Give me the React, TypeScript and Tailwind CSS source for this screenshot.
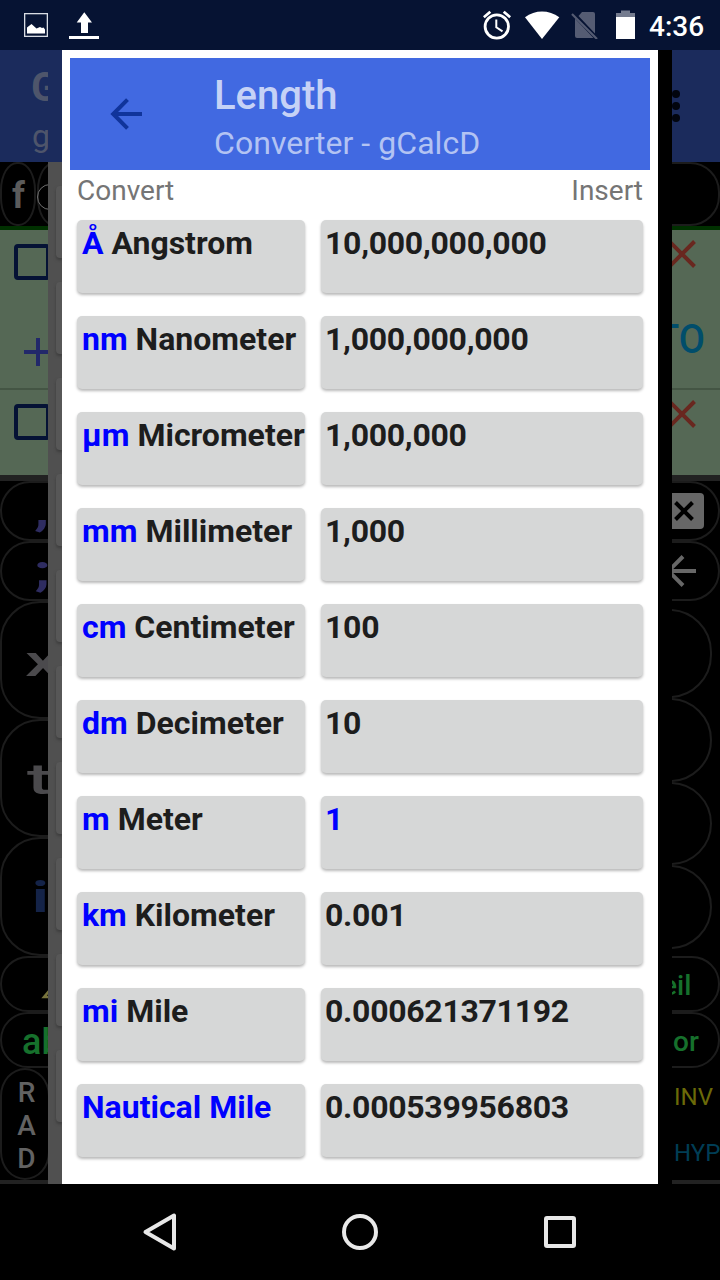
import React from "react";

type Unit = { symbol: string; name?: string; value: string; active?: boolean };

const units: Unit[] = [
  { symbol: "Å", name: "Angstrom", value: "10,000,000,000" },
  { symbol: "nm", name: "Nanometer", value: "1,000,000,000" },
  { symbol: "µm", name: "Micrometer", value: "1,000,000" },
  { symbol: "mm", name: "Millimeter", value: "1,000" },
  { symbol: "cm", name: "Centimeter", value: "100" },
  { symbol: "dm", name: "Decimeter", value: "10" },
  { symbol: "m", name: "Meter", value: "1", active: true },
  { symbol: "km", name: "Kilometer", value: "0.001" },
  { symbol: "mi", name: "Mile", value: "0.000621371192" },
  { symbol: "Nautical Mile", value: "0.000539956803" },
];

function StatusBar() {
  return (
    <div className="flex h-[50px] shrink-0 items-center bg-[#061333] text-white">
      <svg className="ml-6 h-6 w-6" viewBox="0 0 24 24">
        <rect x="0.6" y="0.6" width="22.8" height="22.8" fill="none" stroke="#d8dce4" strokeWidth="1.4" />
        <path d="M3 20.500V14.500l4.500-3.500 5 4.500 3.500-1.500 2 1 1.500-.5 1.500 2v4z" fill="#fff" />
      </svg>
      <svg className="ml-[21px] h-7 w-[30px]" viewBox="0 0 30 28">
        <path d="M15.300 1.200 23 11.500h-4v10.500h-7v-10.500H7.700z" fill="#fff" />
        <path d="M0 26h30v2H0zM0 25h30v1H0z" fill="#fff" />
      </svg>
      <svg className="ml-[384px] h-[30px] w-7" viewBox="0 0 28 30" fill="none" stroke="#fff">
        <circle cx="13.800" cy="16.500" r="11.700" strokeWidth="2.800" />
        <path d="M13.300 9.500v7.800l6.200 4" strokeWidth="2" />
        <path d="M.8 7.300 7.300 1.800M27.200 7.300l-6.500-5.500" strokeWidth="2.800" />
      </svg>
      <svg className="ml-[13px] h-7 w-9" viewBox="0 0 36 28">
        <path d="M1 6.300C11-1.600 25-1.600 35.300 6.300L18 28z" fill="#fff" />
      </svg>
      <svg className="ml-[11px] h-7 w-7" viewBox="0 0 28 28">
        <path d="M11 1h11a2 2 0 0 1 2 2v19.500L7.500 5zM4 7.500 22.500 27H6a2 2 0 0 1-2-2z" fill="#555c73" />
        <path d="m1 3 25 25" stroke="#555c73" strokeWidth="2.200" />
      </svg>
      <svg className="ml-[17px] h-[30px] w-5" viewBox="0 0 20 30">
        <path d="M5 0.500h9V3h5v7H0V3h5z" fill="#747b8e" />
        <path d="M0 7h19v22H0z" fill="#fff" />
      </svg>
      <span className="ml-[13px] pt-0.5 text-[28px] leading-[33px] font-medium">4:36</span>
    </div>
  );
}

const checkbox = "h-9 w-9 shrink-0 rounded-[4px] border-4 border-[#051235]";
const pill = "w-[96px] shrink-0 border-2 border-[#1c1c1c]";
const wide = "block origin-left scale-x-150 text-[42px] font-bold";
const wideLight = "block origin-left scale-x-[1.7] text-[42px] font-medium";

function LeftKeys() {
  return (
    <div className="flex w-12 shrink-0 flex-col overflow-hidden bg-black">
      <div className="h-28 shrink-0 bg-[#1b2b5c] pl-[31px] text-[#4e556b]">
        <div className="w-[17px] overflow-hidden pt-[14px] text-[40px] leading-[47px] font-bold">G</div>
        <div className="pt-[6px] pl-px text-[32px] leading-[38px]">g</div>
      </div>
      <div className="flex h-16 shrink-0 gap-px overflow-hidden text-[#5b5b5b]">
        <div className="flex w-9 shrink-0 items-center justify-center rounded-[17px/28px] border-2 border-[#1c1c1c] pt-1 pl-px text-[36px] font-bold">f</div>
        <div className="flex w-[60px] shrink-0 items-center rounded-[17px/28px] border-2 border-[#1c1c1c]">
          <div className="mt-1.5 -ml-0.5 h-[26px] w-[26px] shrink-0 rounded-full border border-[#707070]" />
        </div>
      </div>
      <div className="h-1 shrink-0 bg-[#003000]" />
      <div className="h-[245px] shrink-0 bg-[#556855]">
        <div className="flex h-[158px] flex-col pt-3.5 pl-3.5">
          <div className={checkbox} />
          <svg className="mt-[58px] ml-2.5 h-7 w-7 shrink-0" viewBox="0 0 28 28">
            <path d="M0 14h28M14 0v28" stroke="#22286a" strokeWidth="4" />
          </svg>
        </div>
        <div className="h-0.5 bg-[#445544]" />
        <div className="pt-3.5 pl-3.5"><div className={checkbox} /></div>
      </div>
      <div className="h-1.5 shrink-0 bg-[#222]" />
      <div className={`${pill} h-[60px] rounded-[30px] pl-8 text-[#2e2c61]`}>
        <span className={`${wide} leading-[55px]`}>,</span>
      </div>
      <div className={`${pill} h-[60px] rounded-[30px] pl-8 text-[#2e2c61]`}>
        <span className={`${wide} leading-[56px]`}>;</span>
      </div>
      <div className={`${pill} h-[118px] rounded-[40px] pl-[23px] text-[#4b4a4d]`}>
        <span className={`${wideLight} leading-[117px]`}>x</span>
      </div>
      <div className={`${pill} h-[118px] rounded-[40px] pl-[25px] text-[#4b4a4d]`}>
        <span className={`${wideLight} leading-[117px]`}>t</span>
      </div>
      <div className={`${pill} h-[119px] rounded-[40px] pl-[30px] text-[#142348]`}>
        <span className={`${wide} leading-[118px]`}>i</span>
      </div>
      <div className={`${pill} h-[56px] rounded-[28px] pl-[38px]`}>
        <svg className="mt-[26px] h-4 w-5" viewBox="0 0 20 16" fill="none" stroke="#77733c" strokeWidth="2.500">
          <path d="M14 1 4 13h16" />
        </svg>
      </div>
      <div className={`${pill} h-[56px] rounded-[28px] pl-5 text-[36px] leading-[56px] font-medium text-[#16702c]`}>ab</div>
      <div className="flex h-28 w-[50px] shrink-0 flex-col items-center rounded-[25px/28px] border-2 border-[#1c1c1c] pt-1.5 pl-[3px] text-[28px] leading-[33px] font-medium text-[#626262]">
        <span>R</span>
        <span>A</span>
        <span>D</span>
      </div>
      <div className="mt-auto h-1 shrink-0 bg-[#222]" />
    </div>
  );
}

function Cross() {
  return (
    <svg className="-ml-1 h-7 w-7" viewBox="0 0 28 28">
      <path d="m1.500 1.500 25 25M26.500 1.500l-25 25" stroke="#69271f" strokeWidth="4" />
    </svg>
  );
}

const endPill = "-ml-12 w-[96px] shrink-0 border-2 border-[#1c1c1c] pl-12";
const circle = "-ml-[46px] w-[86px] shrink-0 rounded-full border-2 border-[#1c1c1c]";

function RightKeys() {
  return (
    <div className="flex w-12 shrink-0 flex-col overflow-hidden bg-black">
      <div className="h-28 shrink-0 bg-[#1b2b5c] pt-10">
        <div className="flex flex-col gap-1">
          <i className="h-2 w-2 rounded-full bg-[#02050e]" />
          <i className="h-2 w-2 rounded-full bg-[#02050e]" />
          <i className="h-2 w-2 rounded-full bg-[#02050e]" />
        </div>
      </div>
      <div className={`${endPill} h-16 rounded-[30px]`} />
      <div className="h-1 shrink-0 bg-[#003000]" />
      <div className="h-[245px] shrink-0 overflow-hidden bg-[#556855]">
        <div className="h-[158px] overflow-hidden pt-[10px]">
          <Cross />
          <div className="mt-[48px] -ml-[16px] origin-left scale-x-95 text-[40px] leading-[47px] font-medium text-[#004d6b]">TO</div>
        </div>
        <div className="h-0.5 bg-[#445544]" />
        <div className="pt-[10px]"><Cross /></div>
      </div>
      <div className="h-1.5 shrink-0 bg-[#222]" />
      <div className={`${endPill} h-[60px] rounded-[30px] pt-[10px]`}>
        <div className="-ml-0.5 h-9 w-8 rounded-r-[4px] bg-[#676767]">
          <svg className="h-9 w-8" viewBox="0 0 32 36">
            <path d="m3.500 9.500 17 17m0-17-17 17" stroke="#000" strokeWidth="4" />
          </svg>
        </div>
      </div>
      <div className={`${endPill} h-[60px] rounded-[30px]`}>
        <svg className="mt-3 -ml-2 h-8 w-8" viewBox="0 0 32 32" fill="none" stroke="#676767" strokeWidth="4">
          <path d="M30 16H2M17 1.500 2.500 16 17 30.500" />
        </svg>
      </div>
      <div className={`${circle} mt-[8px] h-[89px]`} />
      <div className={`${circle} h-[84px]`} />
      <div className={`${circle} h-[83px]`} />
      <div className={`${circle} h-[84px]`} />
      <div className={`${endPill} mt-[7px] h-[56px] overflow-hidden rounded-[28px]`}>
        <div className="-ml-3 pt-[11px] text-[28px] leading-[33px] font-medium text-[#16702c]">eil</div>
      </div>
      <div className={`${endPill} h-[56px] rounded-[28px]`}>
        <div className="-ml-px pt-[11px] text-[28px] leading-[33px] font-medium text-[#16702c]">or</div>
      </div>
      <div className="pt-[15px] pl-0.5 text-[24px] leading-[28px] text-[#6b6a08]">INV</div>
      <div className="pt-[28px] pl-0.5 text-[24px] leading-[28px] text-[#003d55]">HYP</div>
      <div className="mt-auto h-1 shrink-0 bg-[#222]" />
    </div>
  );
}

function RearPanel() {
  return (
    <div className="flex w-3.5 shrink-0 flex-col overflow-hidden">
      <div className="h-28 shrink-0 bg-[#1b2b5c]" />
      <div className="flex grow flex-col items-end gap-6 bg-[#505050] pt-6">
        {units.map((unit) => (
          <div key={unit.symbol} className="h-[72px] w-1.5 shrink-0 rounded-l-[4px] bg-[#575757] shadow-[0_2px_3px_#3c3c3c]" />
        ))}
      </div>
    </div>
  );
}

const key =
  "flex h-[73px] items-start overflow-hidden rounded-[5px] bg-[#d6d7d7] pt-1 text-[32px] leading-[38px] font-bold whitespace-pre shadow-[0_2px_3px_rgba(0,0,0,0.28)]";

function ConverterDialog() {
  return (
    <main className="flex w-[596px] shrink-0 flex-col bg-white p-2 pb-0">
      <header className="flex h-28 shrink-0 bg-[#4169e1]">
        <svg className="mt-10 ml-10 h-8 w-8" viewBox="0 0 32 32" fill="none" stroke="#10349b" strokeWidth="4">
          <path d="M32 16H3M17.500 1.700 3.200 16l14.300 14.300" />
        </svg>
        <div className="ml-[72px]">
          <h1 className="pt-[14px] text-[40px] leading-[47px] font-medium text-[#c6d2f6]">Length</h1>
          <p className="pt-[5px] text-[32px] leading-[38px] tracking-[0.05px] text-[#b3c3f3]">Converter - gCalcD</p>
        </div>
      </header>
      <div className="flex h-[50px] shrink-0 justify-between px-[7px] pt-1 text-[28px] leading-[33px] text-[#757575]">
        <span>Convert</span>
        <span>Insert</span>
      </div>
      <div className="flex flex-col gap-[23px] px-[7px]">
        {units.map((unit) => (
          <div key={unit.symbol} className="flex justify-between">
            <button className={`${key} w-[228px] pl-[5px] text-[#1d1d1d]`}>
              <span className="text-[#0000ff]">{unit.symbol}</span>
              {unit.name ? <span> {unit.name}</span> : null}
            </button>
            <button className={`${key} w-[322px] pl-1 tracking-[-0.29px] ${unit.active ? "text-[#0000ff]" : "text-[#1d1d1d]"}`}>
              {unit.value}
            </button>
          </div>
        ))}
      </div>
    </main>
  );
}

function NavigationBar() {
  return (
    <nav className="flex h-24 shrink-0 items-center bg-black">
      <svg className="ml-[142px] h-10 w-9" viewBox="0 0 36 40">
        <path d="M32 3.500v33L3.500 20z" fill="none" stroke="#e8e8e8" strokeWidth="4" strokeLinejoin="round" />
      </svg>
      <div className="ml-[164px] h-9 w-9 rounded-full border-4 border-[#e8e8e8]" />
      <div className="ml-[166px] h-8 w-8 rounded-[3px] border-4 border-[#e8e8e8]" />
    </nav>
  );
}

export default function App() {
  return (
    <div className="flex h-[1280px] w-[720px] flex-col overflow-hidden bg-black font-[Roboto,sans-serif]">
      <StatusBar />
      <div className="flex h-[1134px] shrink-0 overflow-hidden">
        <LeftKeys />
        <RearPanel />
        <ConverterDialog />
        <div className="w-3.5 shrink-0 bg-black" />
        <RightKeys />
      </div>
      <NavigationBar />
    </div>
  );
}
